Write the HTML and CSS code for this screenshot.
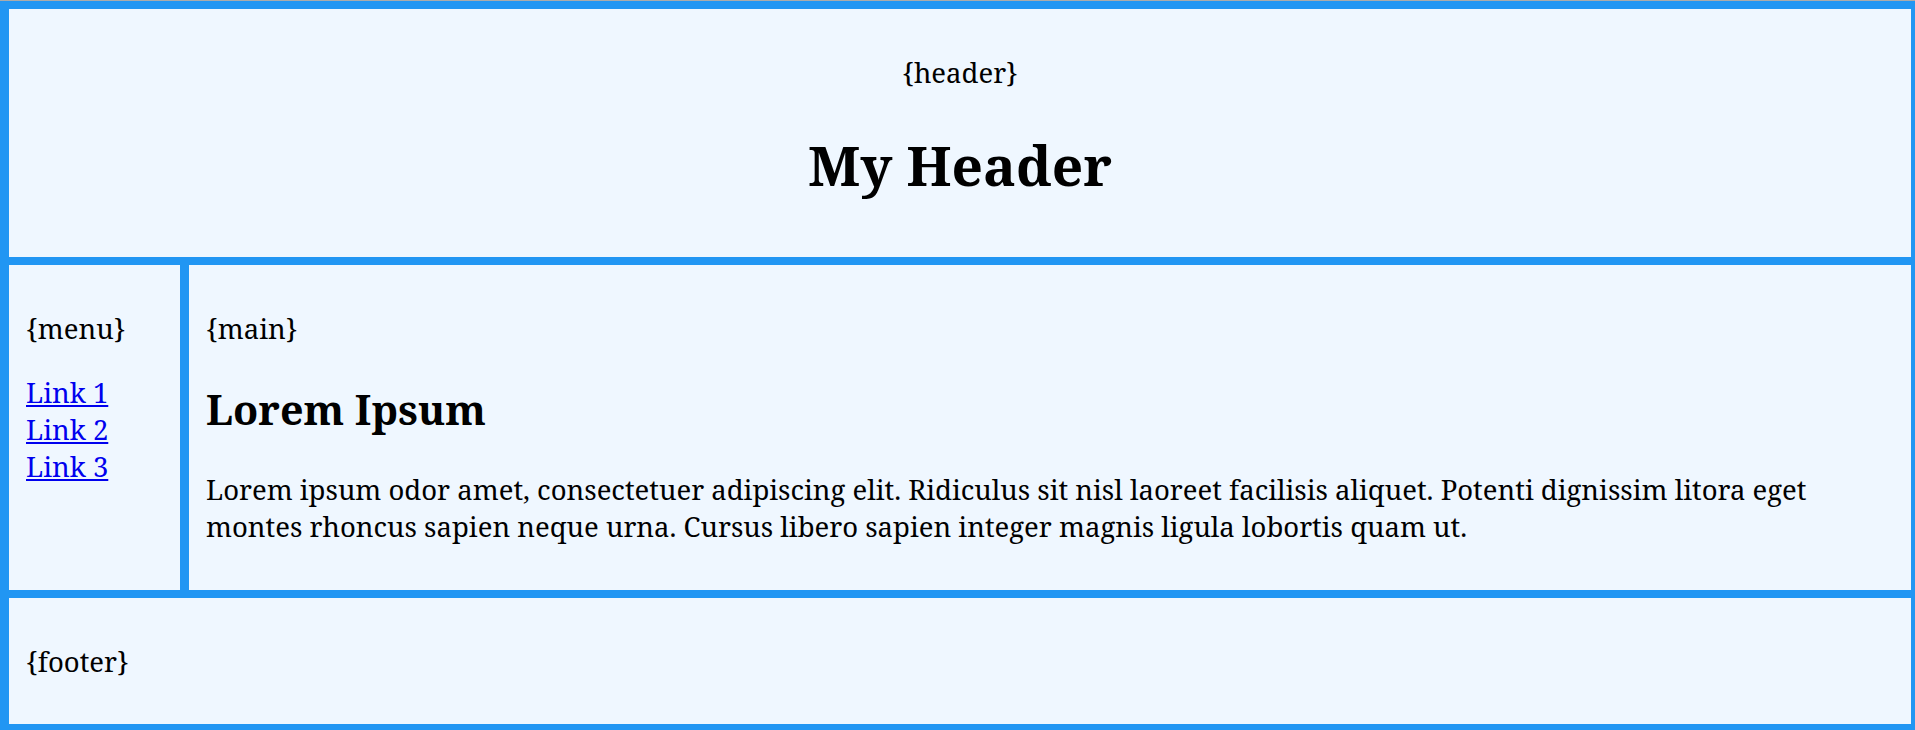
FILE: index.html
```html
<!DOCTYPE html>
<html>
<head>
<meta charset="utf-8">
<title>Layout</title>
<link rel="stylesheet" href="styles.css">
</head>
<body>
<div class="page">
  <header class="cell header">
    <p>{header}</p>
    <h1>My Header</h1>
  </header>
  <nav class="cell menu">
    <p>{menu}</p>
    <ul class="links">
      <li><a href="#">Link 1</a></li>
      <li><a href="#">Link 2</a></li>
      <li><a href="#">Link 3</a></li>
    </ul>
  </nav>
  <main class="cell main">
    <p>{main}</p>
    <h2>Lorem Ipsum</h2>
    <p>Lorem ipsum odor amet, consectetuer adipiscing elit. Ridiculus sit nisl laoreet facilisis aliquet. Potenti dignissim litora eget montes rhoncus sapien neque urna. Cursus libero sapien integer magnis ligula lobortis quam ut.</p>
  </main>
  <footer class="cell footer">
    <p>{footer}</p>
  </footer>
</div>
</body>
</html>
```

FILE: styles.css
```css
html, body {
  margin: 0;
  padding: 0;
}
body {
  font-family: "Noto Serif", serif;
  font-size: 27.5px;
  color: #000;
  border-top: 1px solid #ababab;
  height: 729px;
  overflow: hidden;
}
.page {
  background: #2196f3;
  display: grid;
  grid-template-columns: 171px 1fr;
  grid-template-rows: 248px 325px 126px;
  column-gap: 9px;
  row-gap: 8px;
  padding: 8px 4px 6px 9px;
}
.cell {
  background: #eff7ff;
  padding: 18px 17px 0;
  display: flow-root;
}
.header {
  grid-column: 1 / 3;
  text-align: center;
}
.footer {
  grid-column: 1 / 3;
}
p {
  margin: 27px 0;
}
h1 {
  font-size: 55px;
  margin: 36px 0;
}
h2 {
  font-size: 41.25px;
  margin: 34px 0;
}
.links {
  list-style: none;
  margin: 0;
  padding: 0;
}
.links a {
  color: #0000ee;
}
```
